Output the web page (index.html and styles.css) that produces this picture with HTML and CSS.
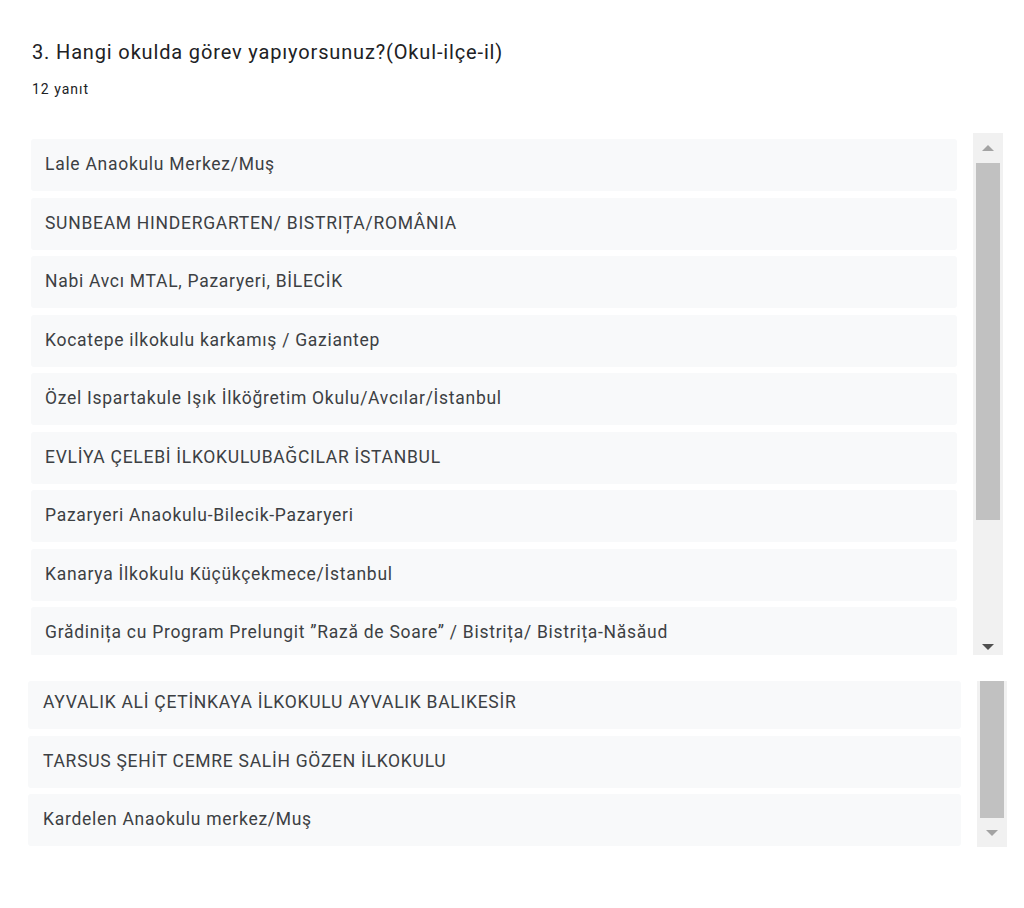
FILE: index.html
```html
<!DOCTYPE html>
<html lang="tr">
<head>
<meta charset="utf-8">
<title>Yanıtlar</title>
<link rel="stylesheet" href="styles.css">
</head>
<body>
<div class="page">
  <div class="header">
    <div class="title">3. Hangi okulda görev yapıyorsunuz?(Okul-ilçe-il)</div>
    <div class="count">12 yanıt</div>
  </div>

  <div class="panel panel-one">
    <div class="list">
      <div class="item">Lale Anaokulu Merkez/Muş</div>
      <div class="item">SUNBEAM HINDERGARTEN/ BISTRIȚA/ROMÂNIA</div>
      <div class="item">Nabi Avcı MTAL, Pazaryeri, BİLECİK</div>
      <div class="item">Kocatepe ilkokulu karkamış / Gaziantep</div>
      <div class="item">Özel Ispartakule Işık İlköğretim Okulu/Avcılar/İstanbul</div>
      <div class="item">EVLİYA ÇELEBİ İLKOKULUBAĞCILAR İSTANBUL</div>
      <div class="item">Pazaryeri Anaokulu-Bilecik-Pazaryeri</div>
      <div class="item">Kanarya İlkokulu Küçükçekmece/İstanbul</div>
      <div class="item item-cut">Grădinița cu Program Prelungit ”Rază de Soare” / Bistrița/ Bistrița-Năsăud</div>
    </div>
    <div class="scrollbar sb-one">
      <div class="arrow up"></div>
      <div class="thumb"></div>
      <div class="track-rest"></div>
      <div class="arrow down dark"></div>
    </div>
  </div>

  <div class="panel panel-two">
    <div class="list">
      <div class="item item-top">AYVALIK ALİ ÇETİNKAYA İLKOKULU AYVALIK BALIKESİR</div>
      <div class="item">TARSUS ŞEHİT CEMRE SALİH GÖZEN İLKOKULU</div>
      <div class="item">Kardelen Anaokulu merkez/Muş</div>
    </div>
    <div class="scrollbar sb-two">
      <div class="thumb"></div>
      <div class="arrow down"></div>
    </div>
  </div>
</div>
</body>
</html>
```

FILE: styles.css
```css
html, body {
  margin: 0;
  padding: 0;
  background: #ffffff;
}

body {
  font-family: Roboto, "Liberation Sans", Arial, sans-serif;
  color: #202124;
}

.page {
  width: 1024px;
  height: 908px;
  display: flex;
  flex-direction: column;
}

.header {
  padding: 39px 0 0 32px;
  height: 95px;
  box-sizing: border-box;
}

.title {
  font-size: 20px;
  line-height: 26px;
  color: #202124;
  letter-spacing: 0.85px;
}

.count {
  margin-top: 16px;
  font-size: 14px;
  line-height: 16px;
  color: #202124;
  letter-spacing: 1px;
}

.panel {
  display: flex;
  align-items: stretch;
}

.panel-one {
  margin-top: 38px;
  margin-left: 31px;
  height: 522px;
}

.panel-two {
  margin-top: 26px;
  margin-left: 28px;
  height: 166px;
}

.list {
  display: flex;
  flex-direction: column;
  overflow: hidden;
}

.panel-one .list {
  width: 926px;
  padding-top: 6px;
  gap: 6.5px;
}

.panel-two .list {
  width: 933px;
  gap: 6.5px;
}

.item {
  flex: none;
  background: #f8f9fa;
  border-radius: 3px;
  font-size: 17.5px;
  letter-spacing: 0.72px;
  line-height: 20px;
  color: #3c4043;
  box-sizing: border-box;
  white-space: nowrap;
}

.panel-one .item {
  height: 52px;
  padding: 15px 14px 0;
}

.panel-two .item {
  height: 52px;
  padding: 15px 15px 0;
}

.panel-two .item-top {
  height: 48px;
  padding-top: 11px;
}

.item-cut {
  height: 49px !important;
}

.scrollbar {
  display: flex;
  flex-direction: column;
  background: #f1f1f1;
}

.sb-one {
  margin-left: 16px;
  width: 30px;
}

.sb-two {
  margin-left: 16px;
  width: 30px;
}

.sb-one .thumb {
  height: 357px;
  margin: 0 3px 0 3px;
  background: #c1c1c1;
}

.sb-two .thumb {
  height: 137px;
  margin: 0 3px 0 3px;
  background: #c1c1c1;
}

.track-rest {
  flex: 1;
}

.arrow {
  flex: none;
  height: 30px;
  display: flex;
  align-items: center;
  justify-content: center;
}

.sb-two .arrow {
  height: 29px;
}

.arrow::before {
  content: "";
  width: 0;
  height: 0;
  border-left: 6px solid transparent;
  border-right: 6px solid transparent;
}

.arrow.up::before {
  border-bottom: 6px solid #a3a3a3;
}

.arrow.down::before {
  border-top: 6px solid #a3a3a3;
}

.arrow.down.dark::before {
  border-top-color: #505050;
}

.sb-one .arrow.down {
  height: 16px;
  align-items: flex-start;
  padding-top: 5px;
  box-sizing: border-box;
}
```
